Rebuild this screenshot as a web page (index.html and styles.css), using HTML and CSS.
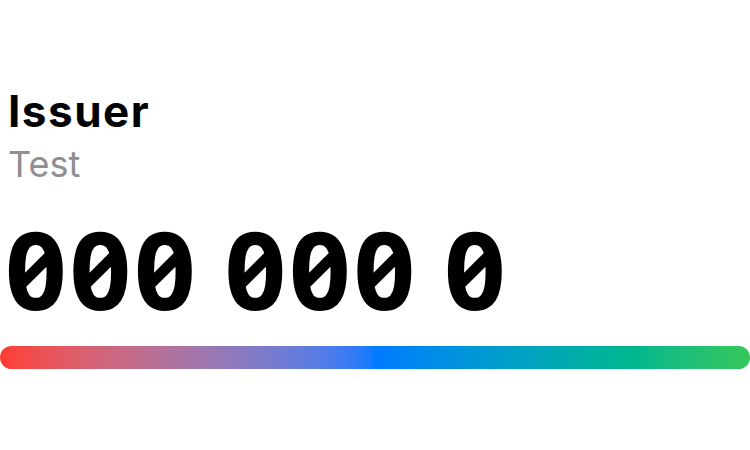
FILE: index.html
```html
<!DOCTYPE html>
<html lang="en">
<head>
<meta charset="utf-8">
<title>Issuer</title>
<link rel="stylesheet" href="styles.css">
</head>
<body>
<main class="card">
  <div class="head">
    <div class="title">Issuer</div>
    <div class="sub">Test</div>
  </div>
  <div class="code">
    <span class="group">000</span>
    <span class="group">000</span>
    <span class="group">0</span>
  </div>
  <div class="bar"></div>
</main>
</body>
</html>
```
FILE: styles.css
```css
html, body {
  margin: 0;
  padding: 0;
  background: #ffffff;
}
.card {
  display: flex;
  flex-direction: column;
  padding-top: 85px;
}
.head {
  padding: 0 8px;
}
.title {
  font-family: Inter, "Liberation Sans", sans-serif;
  font-weight: 700;
  font-size: 44px;
  line-height: 52px;
  letter-spacing: 1.5px;
  color: #000000;
}
.sub {
  font-family: Inter, "Liberation Sans", sans-serif;
  font-weight: 400;
  font-size: 36px;
  line-height: 54px;
  color: #8e8e93;
}
.code {
  display: flex;
  gap: 26px;
  margin-top: 24px;
  padding: 0 5px;
  font-family: "Noto Sans", sans-serif;
  font-weight: 700;
  font-size: 108px;
  line-height: 108px;
  letter-spacing: 2.7px;
  font-feature-settings: "zero" 1, "tnum" 1;
  font-variant-numeric: slashed-zero tabular-nums;
  color: #000000;
}
.bar {
  margin-top: 23px;
  height: 23px;
  border-radius: 12px;
  background: linear-gradient(90deg in oklab, #ff3b30 0%, #007aff 50%, #00b88c 85%, #34c759 100%);
}
```
